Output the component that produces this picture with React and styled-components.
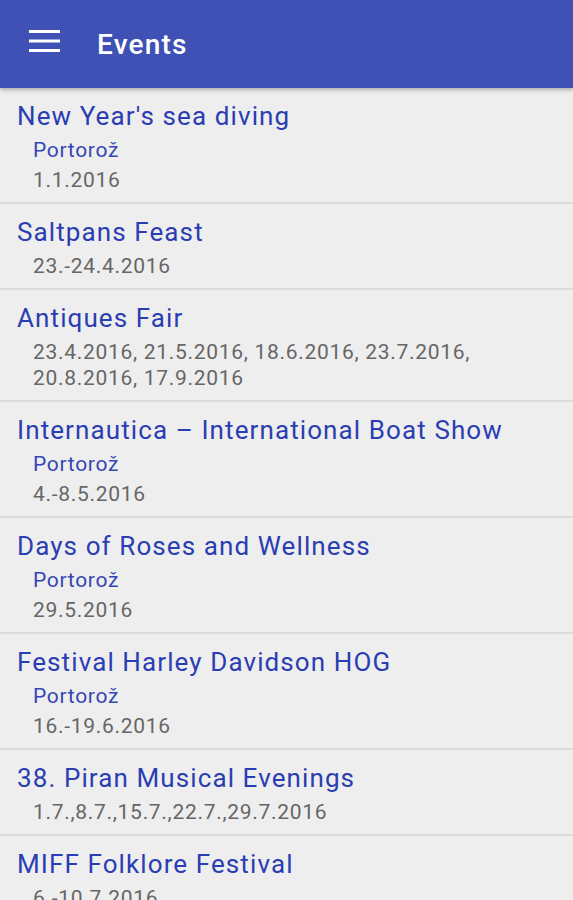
import React from 'react';
import styled, { createGlobalStyle } from 'styled-components';

const GlobalStyle = createGlobalStyle`
	html, body {
		margin: 0;
		padding: 0;
		background: #eeeeee;
		font-family: Roboto, 'Noto Sans', sans-serif;
	}
`;

const events = [
	{ title: "New Year's sea diving", place: 'Portorož', dates: ['1.1.2016'] },
	{ title: 'Saltpans Feast', dates: ['23.-24.4.2016'] },
	{
		title: 'Antiques Fair',
		dates: ['23.4.2016, 21.5.2016, 18.6.2016, 23.7.2016,', '20.8.2016, 17.9.2016'],
	},
	{ title: 'Internautica – International Boat Show', place: 'Portorož', dates: ['4.-8.5.2016'] },
	{ title: 'Days of Roses and Wellness', place: 'Portorož', dates: ['29.5.2016'] },
	{ title: 'Festival Harley Davidson HOG', place: 'Portorož', dates: ['16.-19.6.2016'] },
	{ title: '38. Piran Musical Evenings', dates: ['1.7.,8.7.,15.7.,22.7.,29.7.2016'] },
	{ title: 'MIFF Folklore Festival', dates: ['6.-10.7.2016'] },
];

const App = () => {
	return (
		<Page>
			<GlobalStyle />
			<Toolbar>
				<MenuButton aria-label="menu">
					<svg width="32" height="24" viewBox="0 0 32 24">
						<rect x="0" y="1" width="31" height="3" fill="#fff" />
						<rect x="0" y="10.5" width="31" height="3" fill="#fff" />
						<rect x="0" y="20" width="31" height="3" fill="#fff" />
					</svg>
				</MenuButton>
				<Title>Events</Title>
			</Toolbar>
			<List>
				{events.map((ev) => (
					<Item key={ev.title}>
						<ItemTitle>{ev.title}</ItemTitle>
						{ev.place && <Place>{ev.place}</Place>}
						<Dates>
							{ev.dates.map((d) => (
								<div key={d}>{d}</div>
							))}
						</Dates>
					</Item>
				))}
			</List>
		</Page>
	);
};

const Page = styled.div`
	min-height: 900px;
	background: #eeeeee;
	overflow: hidden;
`;

const Toolbar = styled.header`
	position: relative;
	z-index: 1;
	height: 88px;
	display: flex;
	align-items: center;
	background-color: #3f51b5;
	box-shadow: 0 2px 4px rgba(0, 0, 0, 0.28);
`;

const MenuButton = styled.div`
	width: 32px;
	height: 24px;
	margin-left: 29px;
	margin-top: -6px;
	display: flex;
`;

const Title = styled.h1`
	margin: 0 0 0 36px;
	color: #ffffff;
	font-size: 28px;
	font-weight: 500;
	letter-spacing: 1.2px;
`;

const List = styled.div`
	display: flex;
	flex-direction: column;
`;

const Item = styled.div`
	padding: 10px 8px 9px 17px;
	border-bottom: 2px solid #dcdcdc;
`;

const ItemTitle = styled.div`
	color: #2b3db2;
	font-size: 26px;
	line-height: 36px;
	letter-spacing: 1.1px;
	margin-bottom: 3px;
	white-space: nowrap;
`;

const Place = styled.div`
	color: #3546b5;
	font-size: 21px;
	line-height: 26px;
	letter-spacing: 0.7px;
	padding-left: 16px;
	margin-bottom: 4px;
`;

const Dates = styled.div`
	color: #666666;
	font-size: 21px;
	line-height: 26px;
	padding-left: 16px;
	letter-spacing: 0.7px;
`;

export default App;
